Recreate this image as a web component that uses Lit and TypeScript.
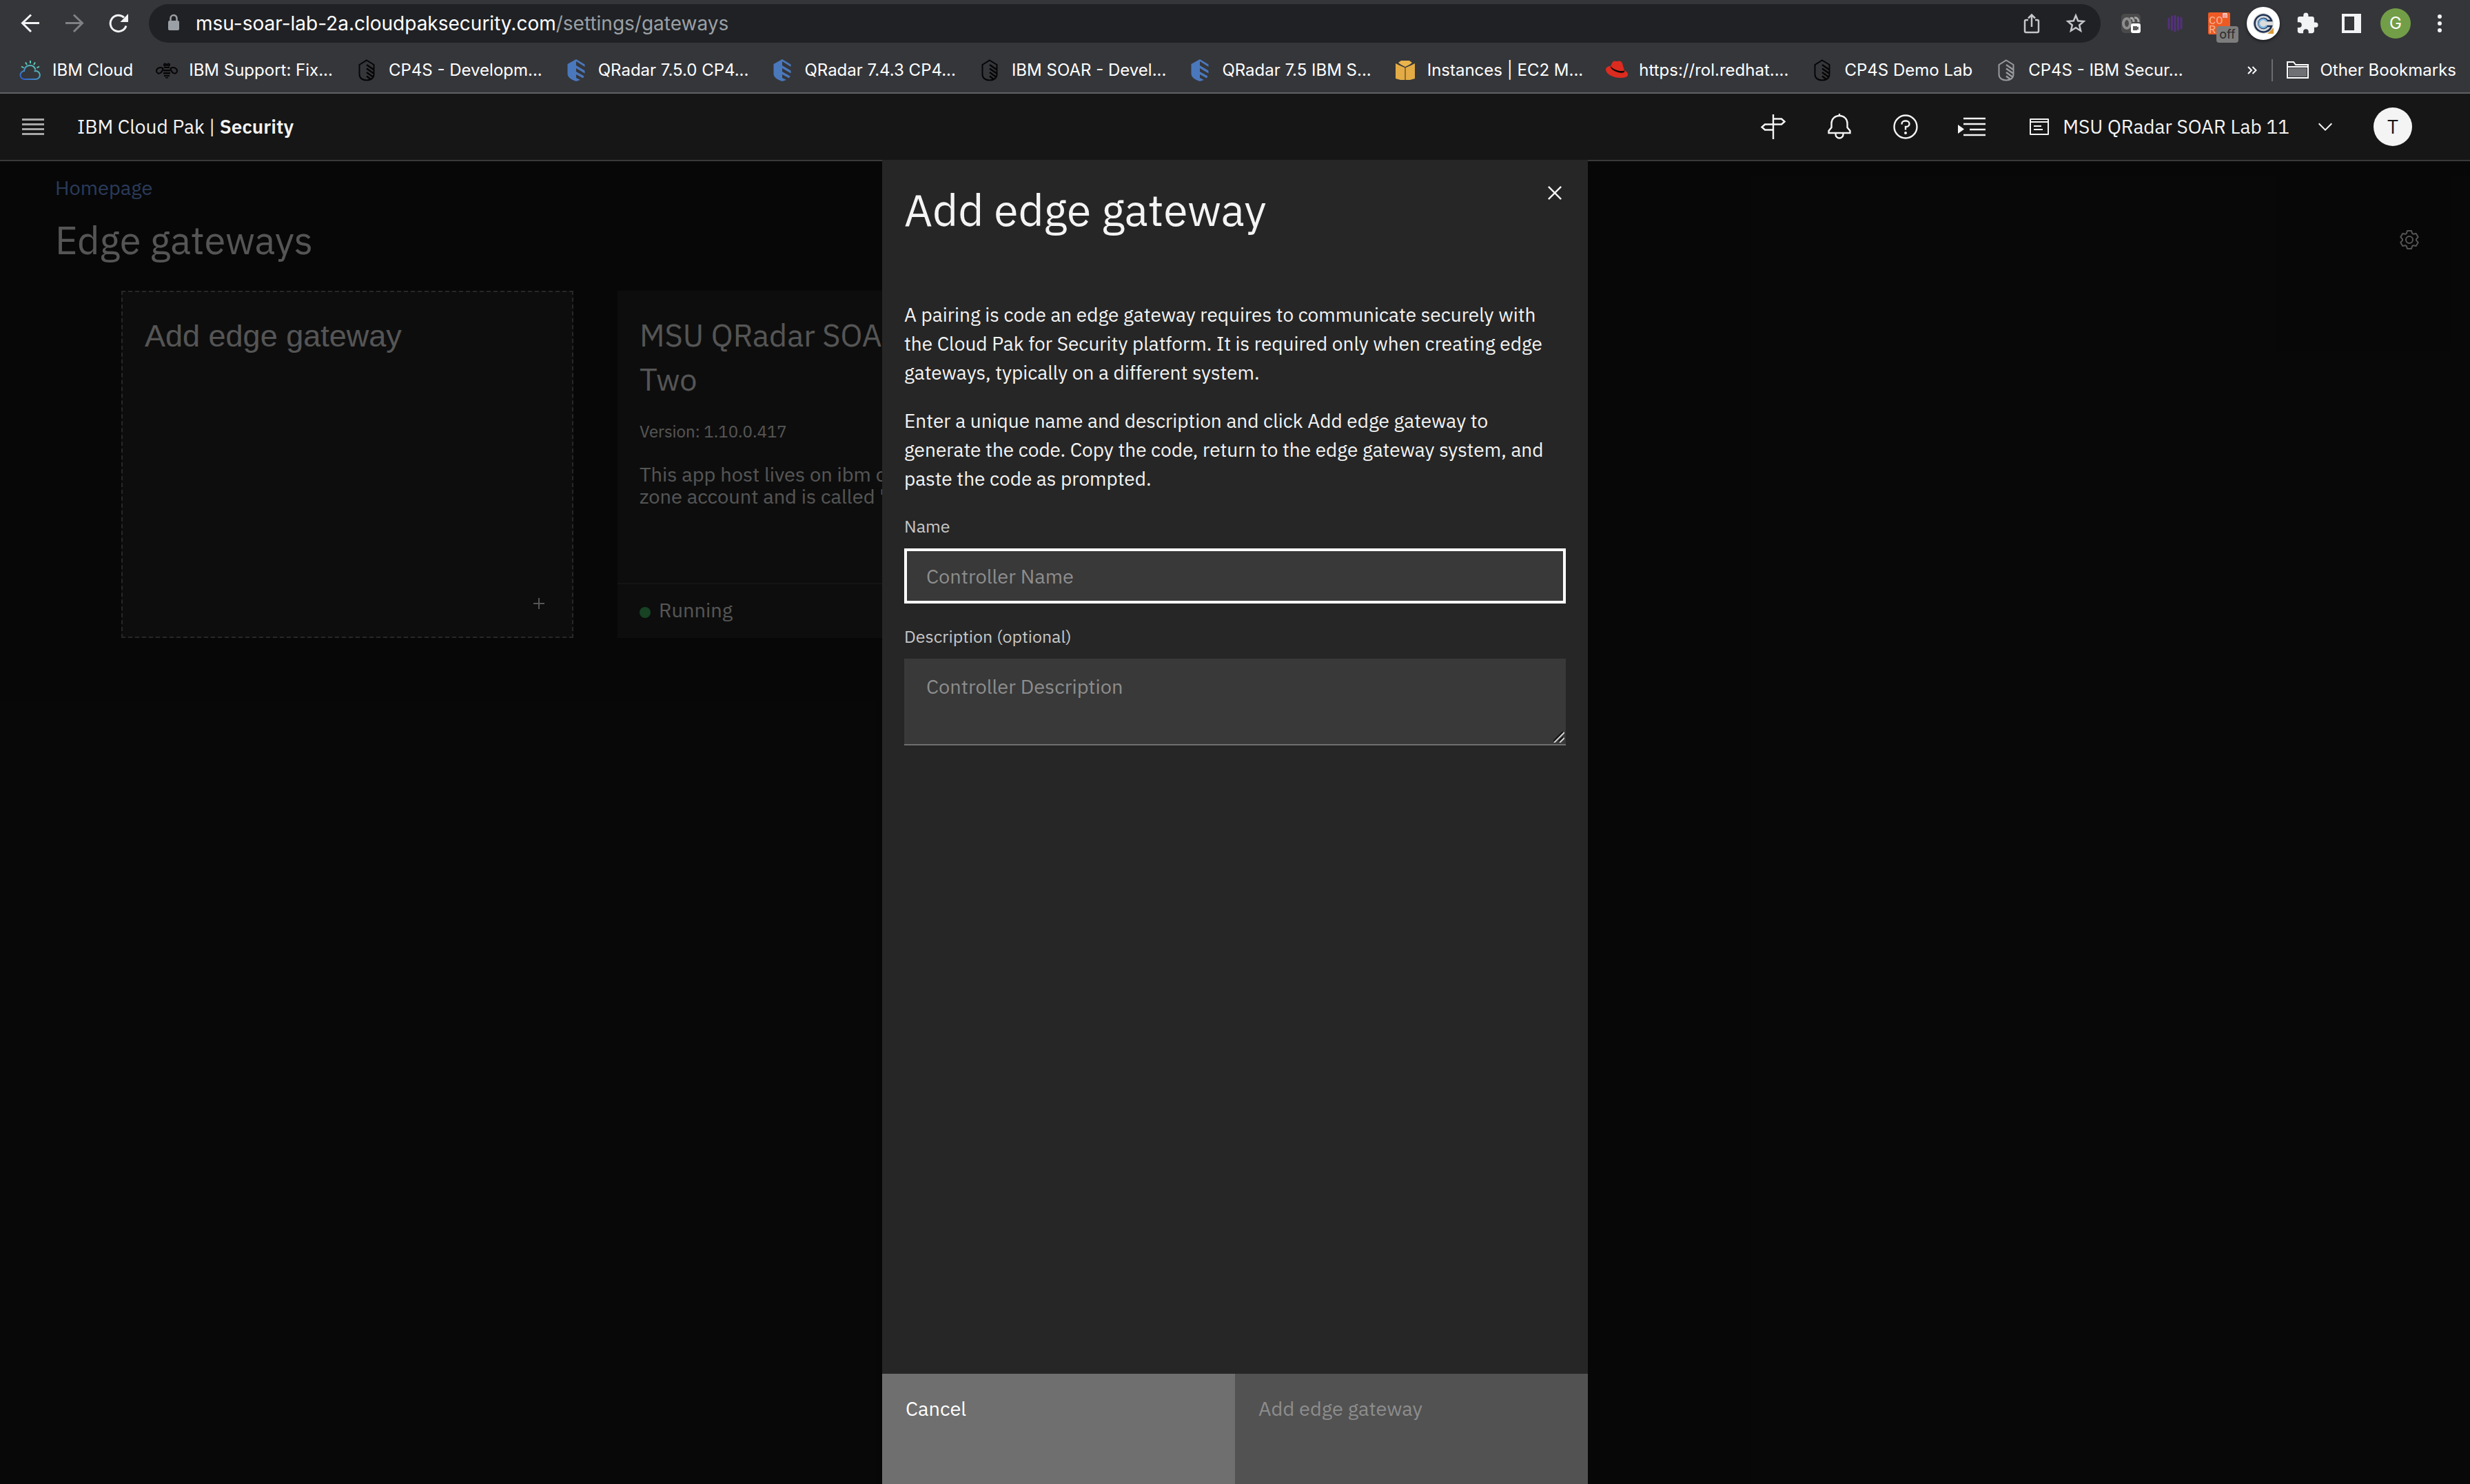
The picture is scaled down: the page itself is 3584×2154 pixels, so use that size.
import { LitElement, html, svg, css, TemplateResult, SVGTemplateResult } from "lit";
import { customElement } from "lit/decorators.js";

const icon = (size: number, view: string, body: SVGTemplateResult) =>
  html`<svg class="icon" width=${size} height=${size} viewBox=${view} aria-hidden="true">${body}</svg>`;

const shieldOutline = (color: string) =>
  icon(32, "0 0 32 32", svg`
    <path d="M16 1.500 26.500 8v14c0 5-4 8.500-10.500 8.500S5.500 27 5.500 22V8Z" fill="none" stroke=${color} stroke-width="2"/>
    <path d="M16 8l10 7M16 13.500l10 7M16 19l9 6.500M16 24.500l6 4.500" stroke=${color} stroke-width="2.400" fill="none"/>`);

const shieldBlue = () =>
  icon(32, "0 0 32 32", svg`
    <path d="M16 0 3.500 7v14c0 5 5 8.500 12.500 11Z" fill="#4a78bd"/>
    <path d="M16 0l12.500 7.500V11L16 3ZM16 9l12.500 7.500v4L16 13ZM16 18l11.500 6.500-1.500 3L16 22ZM16 27l6 3-6 2Z" fill="#4a78bd"/>`);

const cloudSun = () =>
  icon(32, "0 0 32 32", svg`
    <defs>
      <linearGradient id="sky" x1="0" y1="1" x2="1" y2="0">
        <stop offset="0" stop-color="#2a5bd0"/><stop offset="1" stop-color="#62d3b4"/>
      </linearGradient>
    </defs>
    <path d="M8 29h16a6 6 0 1 0-2.500-11.500M8 29a6 6 0 0 1-1-12C7 12 11 9 15.500 9c4 0 7 2 8 6.500" fill="none" stroke="url(#sky)" stroke-width="2"/>
    <path d="M16 2v4M9 4.500l2 3.500M23 4.500 21 8M3 10.500l3.500 2M29 10.500l-3.500 2" stroke="#5cc9b8" stroke-width="2"/>`);

const bee = () =>
  icon(32, "0 0 32 32", svg`
    <g fill="none" stroke="#050505" stroke-width="2">
      <circle cx="13.500" cy="8" r="1.500"/><circle cx="18.500" cy="8" r="1.500"/>
      <path d="M10.500 13C6 10.500 1 13 1 17c0 3 3 4.500 5.500 3C9 18.500 10 16 10.500 13ZM21.500 13c4.500-2.500 9.500 0 9.500 4 0 3-3 4.500-5.500 3-2.500-1.500-3.500-4-4-7Z"/>
    </g>
    <path d="M12 11h8v2h-8ZM11 15h10v2.500H11ZM11 19h10v2.500H11ZM12 23h8v2h-8ZM14 26h4v1.500h-4Z" fill="#050505"/>`);

const cube = () =>
  icon(32, "0 0 32 32", svg`
    <path d="M10 2h12l4 3-4 3-6 3-6-3-4-3Z" fill="#e9b44c"/>
    <path d="M2 6l6 3 7 3v18H9l-7-2ZM30 6l-6 3-7 3v18h6l7-2Z" fill="#e3ab45"/>
    <path d="M15 12h2v18h-2Z" fill="#8b6c33"/>`);

const redHat = () =>
  icon(32, "2 4 32 32", svg`
    <path d="M9 14c-4 0-7 2-7 5 0 6 10 12 21 12 8 0 12-2 11-6-.500-2-2-3.500-5-4.500L26 10c-.500-2-2-3-4-3.500-2-.500-3 1-5 .500-2-.500-4-.500-5 1Z" fill="#dc2b1f"/>
    <path d="M9 14c-1 5 11 11 18 9.500 2-.500 2.500-1.500 2-3-7 2-17-2-20-6.500Z" fill="#0a0a0a"/>`);

interface Bookmark { label: string; art: () => TemplateResult; }

const BOOKMARKS: Bookmark[] = [
  { label: "IBM Cloud", art: cloudSun },
  { label: "IBM Support: Fix...", art: bee },
  { label: "CP4S - Developm...", art: () => shieldOutline("#050505") },
  { label: "QRadar 7.5.0 CP4...", art: shieldBlue },
  { label: "QRadar 7.4.3 CP4...", art: shieldBlue },
  { label: "IBM SOAR - Devel...", art: () => shieldOutline("#050505") },
  { label: "QRadar 7.5 IBM S...", art: shieldBlue },
  { label: "Instances | EC2 M...", art: cube },
  { label: "https://rol.redhat....", art: redHat },
  { label: "CP4S Demo Lab", art: () => shieldOutline("#050505") },
  { label: "CP4S - IBM Secur...", art: () => shieldOutline("#9a9b9e") },
];

const reset = css`
  :host { display: block; }
  * { box-sizing: border-box; }
  button, input, textarea { font: inherit; color: inherit; margin: 0; }
  button { background: none; border: 0; padding: 0; cursor: pointer; text-align: left; }
  a { color: inherit; text-decoration: none; }
  .icon { display: block; flex: none; }
`;

@customElement("browser-bar")
class BrowserBar extends LitElement {
  static styles = [reset, css`
    :host {
      background: #35363a;
      border-bottom: 2px solid #5f6063;
      color: #fff;
      font-family: "Inter", "Roboto", sans-serif;
      font-size: 24px;
    }
    .toolbar { display: flex; align-items: center; height: 68px; padding-right: 12px; }
    .nav { display: flex; flex: none; padding-left: 12px; }
    .nav button, .actions button { display: grid; place-items: center; width: 64px; height: 64px; }
    .address {
      display: flex; flex: 1; align-items: center; min-width: 0; height: 56px;
      margin-left: 12px; padding: 0 4px 0 20px; border-radius: 28px; background: #202124;
    }
    .url {
      flex: 1; min-width: 0; height: 56px; margin-left: 16px; display: flex; align-items: center;
      font-size: 28px; white-space: nowrap; overflow: hidden;
    }
    .path { color: #9aa0a6; }
    .actions { display: flex; flex: none; }
    .extensions { margin-left: 12px; }
    .round { display: grid; place-items: center; border-radius: 50%; }
    .clear { width: 48px; height: 48px; background: #fff; box-shadow: 0 2px 4px #0008; }
    .profile { width: 44px; height: 44px; background: #739e48; }
    .core { position: relative; }
    .core .icon { overflow: visible; }
    .tag {
      position: absolute; right: 4px; bottom: 4px; width: 32px; border-radius: 4px; text-align: center;
      background: #7d7d7d; color: #2a2a2a; font-size: 18px; line-height: 24px;
    }
    .bookmarks { display: flex; align-items: center; height: 66px; padding: 2px 20px 0 28px; }
    .list { display: flex; flex: 1; gap: 33px; min-width: 0; margin: 0; padding: 0; list-style: none; }
    .mark { display: flex; align-items: center; gap: 16px; white-space: nowrap; }
    .rule { width: 2px; height: 32px; margin: 0 20px; background: #6b6c70; }
  `];

  render() {
    return html`
      <div class="toolbar">
        <nav class="nav" aria-label="History">
          <button aria-label="Back">${icon(28, "0 0 28 28", svg`<path d="M27 13.500H3M15 1.500 2.500 13.500 15 26" fill="none" stroke="#f1f3f4" stroke-width="3"/>`)}</button>
          <button aria-label="Forward">${icon(28, "0 0 28 28", svg`<path d="M1 13.500h24M13 1.500 25.500 13.500 13 26" fill="none" stroke="#808185" stroke-width="3"/>`)}</button>
          <button aria-label="Reload">${icon(28, "0 0 28 28", svg`<path d="M25 17.500A11.700 11.700 0 1 1 22 5.500" fill="none" stroke="#f1f3f4" stroke-width="3"/><path d="M28 0v12H16.500Z" fill="#f1f3f4"/>`)}</button>
        </nav>
        <div class="address">
          ${icon(32, "0 0 32 32", svg`<path d="M11.500 13V8.500a4.500 4.500 0 0 1 9 0V13" fill="none" stroke="#9aa0a6" stroke-width="2.500"/><rect x="8" y="12" width="16" height="14" rx="2" fill="#9aa0a6"/>`)}
          <span class="url"><span>msu-soar-lab-2a.cloudpaksecurity.com</span><span class="path">/settings/gateways</span></span>
          <span class="actions">
            <button aria-label="Share">${icon(32, "0 0 32 32", svg`<path d="M11 11H8a2 2 0 0 0-2 2v14a2 2 0 0 0 2 2h16a2 2 0 0 0 2-2V13a2 2 0 0 0-2-2h-3M16 21V4M11 8.500 16 3.500 21 8.500" fill="none" stroke="#c4c7cb" stroke-width="2.500"/>`)}</button>
            <button aria-label="Bookmark this page">${icon(32, "0 0 32 32", svg`<path d="M16 4.500l3.200 7.800 8.300.700-6.300 5.500 1.900 8.200-7.100-4.400-7.100 4.400 1.900-8.200L4.500 13l8.300-.700Z" fill="none" stroke="#c4c7cb" stroke-width="2.500"/>`)}</button>
          </span>
        </div>
        <div class="actions extensions">
          <button aria-label="Recorder">${icon(28, "0 0 28 28", svg`
            <rect width="28" height="28" rx="5" fill="#4a4a4a"/>
            <ellipse cx="8" cy="14" rx="5" ry="7" fill="none" stroke="#8d8d8d" stroke-width="4"/>
            <path d="M13 7c3-2 5 1 5 5M19 6c4-1 6 2 6 6" fill="none" stroke="#a8a8a8" stroke-width="3"/>
            <rect x="14" y="14" width="14" height="14" rx="3" fill="#fff"/>
            <path d="M17 18h6v1.500l2-1v5l-2-1V24h-6Z" fill="#5c5c5c"/>`)}</button>
          <button aria-label="Voice">${icon(24, "0 0 24 24", svg`<path d="M3 5v14M7.500 2v19M12 1v22M16.500 3v18M21 4v15" stroke="#54307c" stroke-width="3" stroke-linecap="round"/>`)}</button>
          <button class="core" aria-label="Core">
            ${icon(32, "0 0 32 32", svg`<rect width="32" height="32" rx="2" fill="#ee5a24"/>
              <g font-family="Liberation Mono, monospace" fill="#f6b08f"><text x="1" y="17" font-size="17">CO</text><text x="1" y="30" font-size="17">R</text><text x="21" y="8" font-size="12" fill="#fff">m</text></g>`)}
            <span class="tag">off</span>
          </button>
          <button aria-label="Copy helper"><span class="round clear">${icon(32, "0 0 32 32", svg`
            <circle cx="16" cy="16" r="15" fill="#dcdcdc"/>
            <path d="M28 12A12.500 12.500 0 1 0 28 20h-6a7 7 0 1 1 0-8Z" fill="#cfd6dd" stroke="#1d2f4f" stroke-width="2.500"/>
            <path d="M21 13a6 6 0 1 0 0 6" fill="none" stroke="#79b4e3" stroke-width="2.500"/>
            <path d="M31 22v9h-9Z" fill="#d99a36"/>`)}</span></button>
          <button aria-label="Extensions">${icon(34, "0 0 24 24", svg`<path d="M20.500 11H19V7c0-1.100-.900-2-2-2h-4V3.500a2.500 2.500 0 0 0-5 0V5H4c-1.100 0-2 .900-2 2v3.800h1.500a2.700 2.700 0 0 1 0 5.400H2V20c0 1.100.900 2 2 2h3.800v-1.500a2.700 2.700 0 0 1 5.400 0V22H17c1.100 0 2-.900 2-2v-4h1.500a2.500 2.500 0 0 0 0-5Z" fill="#f1f3f4"/>`)}</button>
          <button aria-label="Side panel">${icon(28, "0 0 28 28", svg`<path d="M0 0h28v28H0ZM4 4v20h14V4Z" fill="#f1f3f4" fill-rule="evenodd"/>`)}</button>
          <button aria-label="Profile"><span class="round profile">G</span></button>
          <button aria-label="Menu">${icon(28, "0 0 28 28", svg`<g fill="#f1f3f4"><circle cx="14" cy="4" r="3"/><circle cx="14" cy="14" r="3"/><circle cx="14" cy="24" r="3"/></g>`)}</button>
        </div>
      </div>
      <div class="bookmarks">
        <ul class="list">
          ${BOOKMARKS.map((b) => html`<li><a class="mark" href="#">${b.art()}<span>${b.label}</span></a></li>`)}
        </ul>
        <button aria-label="More bookmarks">${icon(16, "0 0 16 16", svg`<path d="M2 3l5 5-5 5M8.500 3l5 5-5 5" fill="none" stroke="#fff" stroke-width="2"/>`)}</button>
        <span class="rule"></span>
        <a class="mark" href="#">${icon(32, "0 0 32 32", svg`<path d="M1 27V4h9l3 4h18v19Z" fill="none" stroke="#fff" stroke-width="2"/><path d="M1 11h30" stroke="#fff" stroke-width="2"/><path d="M3 13h26v12H3Z" fill="#6f7073"/>`)}<span>Other Bookmarks</span></a>
      </div>`;
  }
}

@customElement("product-header")
class ProductHeader extends LitElement {
  static styles = [reset, css`
    :host { background: #161616; border-bottom: 2px solid #393939; color: #f4f4f4; font-size: 28px; }
    .bar { display: flex; align-items: center; height: 96px; padding: 0 84px 0 32px; }
    .brand { display: block; margin-left: 48px; white-space: nowrap; }
    .brand b { font-weight: 600; }
    .tools { display: flex; align-items: center; margin-left: auto; }
    .tool { display: grid; place-items: center; width: 96px; height: 96px; }
    .account { display: flex; align-items: center; gap: 18px; height: 96px; margin-left: 34px; white-space: nowrap; }
    .team { margin-right: 18px; }
    .avatar {
      display: grid; place-items: center; width: 56px; height: 56px; margin-left: 54px;
      border-radius: 50%; background: #f4f4f4; color: #161616;
    }
  `];

  render() {
    return html`
      <header class="bar">
        <button aria-label="Open menu">${icon(32, "0 0 32 32", svg`<path d="M0 5.500h32M0 12.500h32M0 19.500h32M0 26.500h32" stroke="#a8a8a8" stroke-width="3"/>`)}</button>
        <a class="brand" href="#">IBM Cloud Pak | <b>Security</b></a>
        <div class="tools">
          <button class="tool" aria-label="Tours">${icon(40, "0 0 40 40", svg`<path d="M20 2v36M20 8.500h12l4.500 4-4.500 4H8l-4.500 4 4.500 4h12" fill="none" stroke="#f4f4f4" stroke-width="2.400"/>`)}</button>
          <button class="tool" aria-label="Notifications">${icon(40, "0 0 40 40", svg`<path d="M20 1v3M20 4C13 4 8.500 9 8.500 15v6L4.500 26v3h31v-3l-4-5v-6C31.500 9 27 4 20 4ZM14.500 29v2a5.500 5.500 0 0 0 11 0v-2" fill="none" stroke="#f4f4f4" stroke-width="2.400"/>`)}</button>
          <button class="tool" aria-label="Help">${icon(40, "0 0 40 40", svg`<circle cx="20" cy="20" r="16.500" fill="none" stroke="#f4f4f4" stroke-width="2.400"/><path d="M14.500 16.500v-.500c0-2.500 2-4.500 4.500-4.500h2c2.500 0 4.500 2 4.500 4.200 0 2.300-2 4.300-4.500 4.300h-1v4.500" fill="none" stroke="#f4f4f4" stroke-width="2.400"/><circle cx="20" cy="29" r="2" fill="#f4f4f4"/>`)}</button>
          <button class="tool" aria-label="Switch panel">${icon(40, "0 0 40 40", svg`<path d="M8 8h32M8 16h32M17 24h23M8 32h32" stroke="#f4f4f4" stroke-width="2.600"/><path d="M0 17v13l9-6.500Z" fill="#f4f4f4"/>`)}</button>
          <button class="account">
            ${icon(32, "0 0 32 32", svg`<path d="M3 5h26v22H3ZM3 9h26M8 15h11M8 20h13" fill="none" stroke="#f4f4f4" stroke-width="2" stroke-linejoin="round"/>`)}
            <span class="team">MSU QRadar SOAR Lab 11</span>
            ${icon(32, "0 0 16 16", svg`<path d="M8 11 3 6l.700-.700L8 9.600l4.300-4.300L13 6Z" fill="#f4f4f4"/>`)}
          </button>
          <button class="avatar" aria-label="Account">T</button>
        </div>
      </header>`;
  }
}

@customElement("gateway-list")
class GatewayList extends LitElement {
  static styles = [reset, css`
    :host { color: #f4f4f4; }
    .page { padding: 18px 72px 0 80px; }
    .crumb { color: #78a9ff; line-height: 40px; }
    .head { display: flex; align-items: center; justify-content: space-between; height: 76px; margin-top: 18px; }
    h1 { margin: 0; font-size: 56px; font-weight: 400; line-height: 72px; }
    .cards { display: flex; gap: 64px; padding: 36px 96px 0; }
    .card { display: flex; flex-direction: column; width: 656px; height: 504px; background: #262626; }
    .add { border: 2px dashed #6f6f6f; padding: 32px; font-family: "Liberation Sans", sans-serif; font-size: 45px; line-height: 64px; justify-content: space-between; }
    .plus { align-self: flex-end; }
    .main { flex: 1; padding: 32px 32px 0; }
    h2 { margin: 0; font-size: 45px; font-weight: 400; line-height: 64px; }
    .version { margin: 28px 0 0; font-size: 24px; line-height: 32px; }
    .about { margin: 30px 0 0; line-height: 32px; white-space: nowrap; }
    .status { display: flex; align-items: center; gap: 12px; height: 80px; padding: 0 32px 4px; border-top: 2px solid #393939; }
    .dot { width: 16px; height: 16px; margin-top: 8px; border-radius: 50%; background: #42be65; }
  `];

  render() {
    return html`
      <main class="page">
        <a class="crumb" href="#">Homepage</a>
        <div class="head">
          <h1>Edge gateways</h1>
          <button aria-label="Settings">${icon(32, "-16 -16 32 32", svg`<path d="M-3-13H3L4.200-9.100 5.700-8.200 9.700-9.100 12.700-3.900 10-.900V.900L12.700 3.900 9.700 9.100 5.700 8.200 4.200 9.100 3 13H-3L-4.200 9.100-5.700 8.200-9.700 9.100-12.700 3.900-10 .900V-.900L-12.700-3.900-9.700-9.100-5.700-8.200-4.200-9.100Z" fill="none" stroke="#f4f4f4" stroke-width="2" stroke-linejoin="round"/><circle r="5" fill="none" stroke="#f4f4f4" stroke-width="2"/>`)}</button>
        </div>
        <section class="cards">
          <button class="card add">
            <span>Add edge gateway</span>
            <span class="plus">${icon(32, "0 0 32 32", svg`<path d="M16 8v16M8 16h16" stroke="#f4f4f4" stroke-width="2"/>`)}</span>
          </button>
          <article class="card">
            <div class="main">
              <h2>MSU QRadar SOAR Lab<br>Two</h2>
              <p class="version">Version: 1.10.0.417</p>
              <p class="about">This app host lives on ibm cloud<br>zone account and is called "</p>
            </div>
            <div class="status"><span class="dot"></span>Running</div>
          </article>
        </section>
      </main>`;
  }
}

@customElement("add-gateway-dialog")
class AddGatewayDialog extends LitElement {
  static styles = [reset, css`
    :host { display: flex; flex-direction: column; width: 1024px; max-width: 100%; background: #262626; color: #f4f4f4; }
    .body { flex: 1; padding: 32px; }
    .top { display: flex; justify-content: space-between; align-items: flex-start; }
    h2 { margin: 0; font-size: 64px; font-weight: 400; line-height: 80px; }
    .close { margin: -4px -4px 0 0; }
    .copy { margin: 92px 0 32px; display: grid; gap: 28px; }
    p { margin: 0; font-size: 28px; line-height: 42px; }
    .field { display: flex; flex-direction: column; position: relative; }
    label { color: #c6c6c6; font-size: 25px; line-height: 32px; margin-bottom: 16px; }
    .box { width: 100%; background: #393939; border: 0; border-radius: 0; outline: 0; }
    .box::placeholder { color: #8d8d8d; opacity: 1; }
    .name { height: 80px; padding: 0 28px; border: 4px solid #fff; margin-bottom: 32px; }
    .about { display: block; height: 126px; padding: 20px 32px; line-height: 40px; border-bottom: 2px solid #6f6f6f; resize: none; overflow: hidden; }
    .grip { position: absolute; right: 2px; bottom: 4px; pointer-events: none; }
    .actions { display: grid; grid-template-columns: 1fr 1fr; }
    .actions button { height: 160px; padding: 30px 34px; display: flex; line-height: 40px; }
    .cancel { background: #6f6f6f; color: #fff; }
    .submit { background: #525252; color: #8d8d8d; }
  `];

  render() {
    return html`
      <div class="body">
        <div class="top">
          <h2>Add edge gateway</h2>
          <button class="close" aria-label="Close">${icon(40, "0 0 32 32", svg`<path d="M24 9.400 22.600 8 16 14.600 9.400 8 8 9.400 14.600 16 8 22.600 9.400 24 16 17.400 22.600 24 24 22.600 17.400 16Z" fill="#f4f4f4"/>`)}</button>
        </div>
        <div class="copy">
          <p>A pairing is code an edge gateway requires to communicate securely with the Cloud Pak for Security platform. It is required only when creating edge gateways, typically on a different system.</p>
          <p>Enter a unique name and description and click Add edge gateway to generate the code. Copy the code, return to the edge gateway system, and paste the code as prompted.</p>
        </div>
        <div class="field"><label for="name">Name</label><input class="box name" id="name" placeholder="Controller Name"></div>
        <div class="field">
          <label for="about">Description (optional)</label>
          <textarea class="box about" id="about" placeholder="Controller Description"></textarea>
          <span class="grip">${icon(16, "0 0 16 16", svg`<path d="M0 14 14 0M8 14l6-6" stroke="#111" stroke-width="2"/><path d="M1 16 16 1M9 16l7-7" stroke="#d0d0d0" stroke-width="2"/>`)}</span>
        </div>
      </div>
      <div class="actions">
        <button class="cancel">Cancel</button>
        <button class="submit" disabled>Add edge gateway</button>
      </div>`;
  }
}

@customElement("app-root")
class AppRoot extends LitElement {
  static styles = [reset, css`
    :host {
      display: flex; flex-direction: column; min-height: 100vh; background: #161616;
      font-family: "IBM Plex Sans", "Open Sans", sans-serif; font-size: 29px; line-height: 40px;
    }
    .stage { position: relative; flex: 1; }
    .shade { position: absolute; inset: 0; display: flex; justify-content: center; background: rgba(0, 0, 0, 0.65); }
    add-gateway-dialog { margin-top: -2px; }
  `];

  render() {
    return html`
      <browser-bar></browser-bar>
      <product-header></product-header>
      <div class="stage">
        <gateway-list></gateway-list>
        <div class="shade">
          <add-gateway-dialog role="dialog" aria-modal="true" aria-label="Add edge gateway"></add-gateway-dialog>
        </div>
      </div>`;
  }
}
